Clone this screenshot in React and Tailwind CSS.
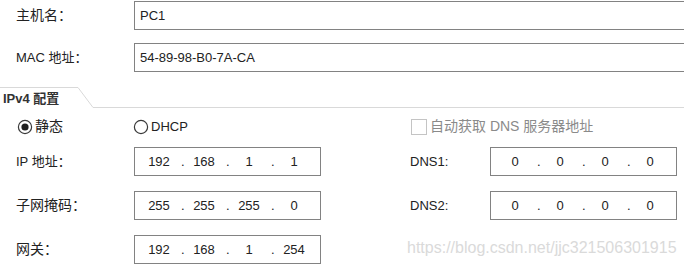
const cjk = { fontFamily: '"Liberation Sans", "Noto Sans CJK SC", sans-serif' };

function IpBox({ parts, className = "" }) {
    return (
        <div
            className={`flex shrink-0 items-center h-[29px] border border-[#828282] bg-white pl-[5px] text-[13px] text-[#222] ${className}`}
        >
            {parts.map((p, i) => (
                <div key={i} className="flex items-center">
                    <span className="w-[38px] text-center">{p}</span>
                    {i < parts.length - 1 && (
                        <span className="w-[7px] pl-[3px] text-left leading-none">.</span>
                    )}
                </div>
            ))}
        </div>
    );
}

function Radio({ checked }) {
    return (
        <svg width="16" height="16" viewBox="0 0 16 16" className="shrink-0">
            <circle cx="8" cy="8" r="6.6" fill="white" stroke="#3a3a3a" strokeWidth="1.2" />
            {checked && <circle cx="8" cy="8" r="3.6" fill="#1e1e1e" />}
        </svg>
    );
}

export default function App() {
    return (
        <div
            className="relative w-[684px] h-[267px] overflow-hidden bg-white text-[#222]"
            style={cjk}
        >
            {/* host / mac */}
            <div className="pt-[1px]">
                <div className="flex items-center h-[29px]">
                    <span className="w-[134px] shrink-0 pl-[16px] text-[14px]">主机名：</span>
                    <div className="flex shrink-0 items-center h-[29px] w-[600px] border border-[#828282] pl-[5px] text-[13px]">
                        PC1
                    </div>
                </div>
                <div className="flex items-center h-[29px] mt-[13px]">
                    <span className="w-[134px] shrink-0 pl-[16px] text-[13px]">MAC 地址：</span>
                    <div className="flex shrink-0 items-center h-[29px] w-[600px] border border-[#828282] pl-[5px] text-[13px]">
                        54-89-98-B0-7A-CA
                    </div>
                </div>
            </div>

            {/* tab header */}
            <div className="relative mt-[15px] h-[21px]">
                <svg
                    className="absolute inset-0"
                    width="684"
                    height="21"
                    viewBox="0 0 684 21"
                >
                    <polyline
                        points="0,0.5 78,0.5 93,20.5 684,20.5"
                        fill="none"
                        stroke="#d9d9d9"
                        strokeWidth="1"
                    />
                </svg>
                <div className="relative pl-[3px] pt-[3px] text-[13px] font-semibold text-[#333] leading-[18px]">
                    IPv4 配置
                </div>
            </div>

            {/* radio row */}
            <div className="flex items-center h-[37px]">
                <div className="flex shrink-0 items-center w-[410px]">
                    <div className="flex items-center w-[133px] pl-[17px] gap-[2px]">
                        <Radio checked />
                        <span className="text-[14px]">静态</span>
                    </div>
                    <div className="flex items-center gap-[2px]">
                        <Radio />
                        <span className="text-[13px]">DHCP</span>
                    </div>
                </div>
                <div className="flex items-center gap-[3px] pl-[1px]">
                    <div className="w-[16px] h-[16px] border border-[#c4c4c4] bg-white" />
                    <span className="text-[14px] text-[#8a8a8a]">自动获取 DNS 服务器地址</span>
                </div>
            </div>

            {/* address rows */}
            <div className="flex flex-col gap-[15px] mt-[2px]">
                <div className="flex items-center">
                    <span className="w-[134px] shrink-0 pl-[16px] text-[13px]">IP 地址：</span>
                    <IpBox parts={["192", "168", "1", "1"]} className="w-[187px]" />
                    <span className="w-[169px] shrink-0 pl-[89px] text-[13px]">DNS1:</span>
                    <IpBox parts={["0", "0", "0", "0"]} className="w-[187px]" />
                </div>
                <div className="flex items-center">
                    <span className="w-[134px] shrink-0 pl-[16px] text-[14px]">子网掩码：</span>
                    <IpBox parts={["255", "255", "255", "0"]} className="w-[187px]" />
                    <span className="w-[169px] shrink-0 pl-[89px] text-[13px]">DNS2:</span>
                    <IpBox parts={["0", "0", "0", "0"]} className="w-[187px]" />
                </div>
                <div className="flex items-center">
                    <span className="w-[134px] shrink-0 pl-[16px] text-[14px]">网关：</span>
                    <IpBox parts={["192", "168", "1", "254"]} className="w-[187px]" />
                </div>
            </div>

            {/* watermark */}
            <div
                className="absolute left-[407px] top-[236px] text-[16px] text-[#dadada]"
                style={{ fontFamily: '"Liberation Sans", sans-serif' }}
            >
                https://blog.csdn.net/jjc321506301915
            </div>
        </div>
    );
}
